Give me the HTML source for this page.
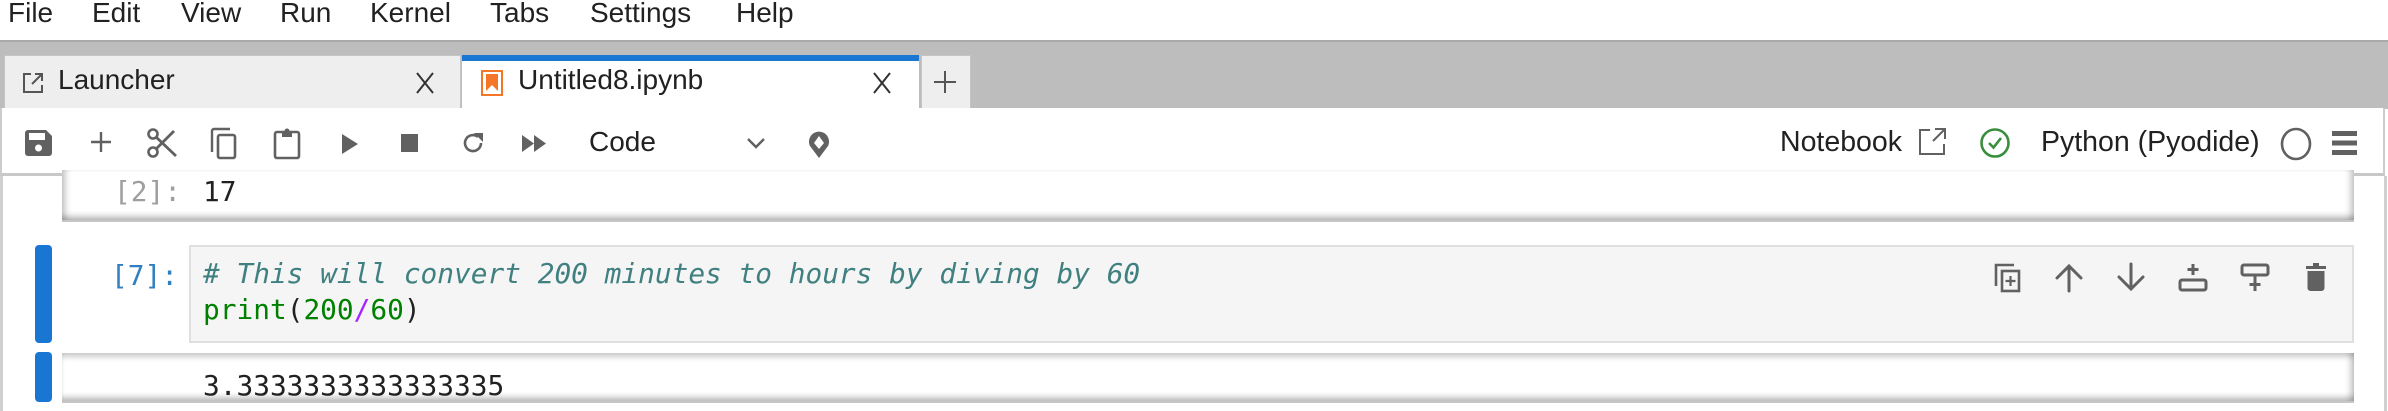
<!DOCTYPE html>
<html><head><meta charset="utf-8"><style>
*{margin:0;padding:0;box-sizing:border-box}
body{width:2388px;height:411px;overflow:hidden;background:#fff;font-family:"Liberation Sans",sans-serif;color:#212121;position:relative}
.a{position:absolute}
.menu{top:-3px;font-size:28px;line-height:32px}
.tabtxt{font-size:28px;line-height:32px;top:64px}
svg{position:absolute;overflow:visible}
.mono{font-family:"DejaVu Sans Mono","Liberation Mono",monospace;font-size:27.8px;white-space:pre}
</style></head><body>
<div class="a menu" style="left:8px">File</div>
<div class="a menu" style="left:92px">Edit</div>
<div class="a menu" style="left:181px">View</div>
<div class="a menu" style="left:280px">Run</div>
<div class="a menu" style="left:370px">Kernel</div>
<div class="a menu" style="left:490px">Tabs</div>
<div class="a menu" style="left:590px">Settings</div>
<div class="a menu" style="left:736px">Help</div>

<div class="a" style="left:0;top:40px;width:2388px;height:69px;background:#bdbdbd;border-top:2px solid #aaa"></div>
<div class="a" style="left:4px;top:55px;width:457px;height:54px;background:#eeeeee;border:1px solid #c4c4c4;border-bottom:none"></div>
<svg style="left:22px;top:72px" width="22" height="22" viewBox="0 0 22 22"><path d="M9 2H2v18h18v-7M13 2h7v7M20 2L10 12" fill="none" stroke="#555" stroke-width="2"/></svg>
<div class="a tabtxt" style="left:58px">Launcher</div>
<svg style="left:416px;top:72px" width="18" height="22"><path d="M1 1l16 20M17 1L1 21" stroke="#333" stroke-width="2"/></svg>
<div class="a" style="left:462px;top:55px;width:457px;height:54px;background:#fff;border-top:6px solid #1976d2"></div>
<svg style="left:481px;top:70px" width="22" height="26" viewBox="0 0 22 26"><rect x="1" y="1" width="20" height="24" fill="none" stroke="#f37726" stroke-width="2"/><path d="M5 4h12v17l-6-6-6 6z" fill="#f37726"/></svg>
<div class="a tabtxt" style="left:518px">Untitled8.ipynb</div>
<svg style="left:873px;top:72px" width="18" height="22"><path d="M1 1l16 20M17 1L1 21" stroke="#333" stroke-width="2"/></svg>
<div class="a" style="left:921px;top:55px;width:50px;height:54px;background:#eeeeee;border:1px solid #c4c4c4;border-bottom:none"></div>
<svg style="left:933px;top:70px" width="24" height="24"><path d="M12 1v22M1 12h22" stroke="#555" stroke-width="2"/></svg>

<div class="a" style="left:0;top:108px;width:2385px;height:68px;background:#fff;border-bottom:3px solid #c8c8c8;border-left:2px solid #ccc;border-right:2px solid #ccc"></div>
<svg style="left:25px;top:130px" width="27" height="26" viewBox="0 0 27 26"><path d="M3 0h18l6 6v17a3 3 0 0 1-3 3H3a3 3 0 0 1-3-3V3a3 3 0 0 1 3-3z" fill="#616161"/><rect x="4" y="3" width="16" height="7" fill="#fff"/><circle cx="13.5" cy="18" r="3.5" fill="#fff"/></svg>
<svg style="left:90px;top:131px" width="22" height="22"><path d="M11 1v20M1 11h20" stroke="#616161" stroke-width="2.4"/></svg>
<svg style="left:147px;top:128px" width="30" height="30" viewBox="0 0 30 30"><circle cx="6" cy="24" r="4.5" fill="none" stroke="#616161" stroke-width="2.6"/><circle cx="6" cy="6" r="4.5" fill="none" stroke="#616161" stroke-width="2.6"/><path d="M9 9l20 19M9 21L27 3" stroke="#616161" stroke-width="2.8"/></svg>
<svg style="left:210px;top:128px" width="28" height="32" viewBox="0 0 28 32"><path d="M2 24V3a2 2 0 0 1 2-2h16" fill="none" stroke="#616161" stroke-width="2.4"/><rect x="8" y="7" width="17" height="23" rx="2" fill="none" stroke="#616161" stroke-width="2.6"/></svg>
<svg style="left:273px;top:128px" width="28" height="32" viewBox="0 0 28 32"><rect x="2" y="4" width="24" height="26" rx="2" fill="none" stroke="#616161" stroke-width="2.6"/><path d="M9 3h10v6H9z" fill="#616161"/><circle cx="14" cy="3" r="2.5" fill="#616161"/></svg>
<svg style="left:342px;top:134px" width="16" height="20"><path d="M0 0l16 10L0 20z" fill="#616161"/></svg>
<svg style="left:401px;top:134px" width="17" height="18"><rect width="17" height="18" fill="#616161"/></svg>
<svg style="left:461px;top:131px" width="24" height="24" viewBox="0 0 24 24"><path d="M20 12a8 8 0 1 1-3-6.2" fill="none" stroke="#616161" stroke-width="2.6"/><path d="M13 2h9v9z" fill="#616161"/></svg>
<svg style="left:522px;top:135px" width="24" height="17"><path d="M0 0l12 8.5L0 17zM12 0l12 8.5L12 17z" fill="#616161"/></svg>
<div class="a" style="left:589px;top:126px;font-size:28px;line-height:32px">Code</div>
<svg style="left:747px;top:138px" width="18" height="11"><path d="M1 1l8 8 8-8" fill="none" stroke="#616161" stroke-width="2.4"/></svg>
<svg style="left:807px;top:128px" width="24" height="31" viewBox="0 0 24 31"><path d="M12 30L3 18A10 10 0 1 1 21 18z" fill="#616161"/><path d="M12 21l-5-6 5-7 5 7z" fill="#fff"/></svg>
<div class="a" style="left:1780px;top:126px;font-size:28.5px;line-height:32px">Notebook</div>
<svg style="left:1918px;top:128px" width="28" height="28" viewBox="0 0 28 28"><path d="M12 2H2v24h24V16M17 1h10v10M27 1L15 13" fill="none" stroke="#616161" stroke-width="2"/></svg>
<svg style="left:1979px;top:127px" width="32" height="32"><circle cx="16" cy="16" r="13.5" fill="none" stroke="#388e3c" stroke-width="2.6"/><path d="M10 16l4.5 4.5L22 11" fill="none" stroke="#388e3c" stroke-width="2.6"/></svg>
<div class="a" style="left:2041px;top:126px;font-size:28.5px;line-height:32px">Python (Pyodide)</div>
<svg style="left:2280px;top:127px" width="32" height="34"><ellipse cx="16" cy="17" rx="14" ry="15" fill="none" stroke="#616161" stroke-width="2.6"/></svg>
<svg style="left:2332px;top:131px" width="25" height="24"><rect y="0" width="25" height="5" fill="#616161"/><rect y="9.5" width="25" height="5" fill="#616161"/><rect y="19" width="25" height="5" fill="#616161"/></svg>

<div class="a" style="left:0;top:176px;width:3px;height:235px;background:#d0d0d0"></div>
<div class="a" style="left:2384px;top:176px;width:3px;height:235px;background:#d0d0d0"></div>
<div class="a" style="left:62px;top:170px;width:2292px;height:52px;background:#fff;box-shadow:inset 0 -7px 6px -3px rgba(0,0,0,.25),inset -7px 0 6px -3px rgba(0,0,0,.2),inset 7px 0 6px -3px rgba(0,0,0,.2);border-bottom:2px solid #c6c6c6"></div>
<div class="a mono" style="left:114px;top:176px;color:#9e9e9e;line-height:32px">[2]:</div>
<div class="a mono" style="left:203px;top:176px;line-height:32px">17</div>

<div class="a" style="left:35px;top:245px;width:17px;height:98px;background:#1976d2;border-radius:4px"></div>
<div class="a" style="left:189px;top:245px;width:2165px;height:98px;background:#f5f5f5;border:2px solid #e0e0e0"></div>
<div class="a mono" style="left:111px;top:258px;color:#307fc1;line-height:36px">[7]:</div>
<div class="a mono" style="left:203px;top:256px;line-height:36px"><span style="color:#408080;font-style:italic"># This will convert 200 minutes to hours by diving by 60</span>
<span style="color:#008000">print</span>(<span style="color:#008000">200</span><span style="color:#aa22ff">/</span><span style="color:#008000">60</span>)</div>
<svg style="left:1994px;top:262px" width="28" height="31" viewBox="0 0 28 31"><path d="M2 24V3h18" fill="none" stroke="#616161" stroke-width="2.6"/><rect x="8" y="9" width="17" height="20" fill="none" stroke="#616161" stroke-width="2.6"/><path d="M16.5 14v10M11.5 19h10" stroke="#616161" stroke-width="2.2"/></svg>
<svg style="left:2055px;top:263px" width="28" height="29" viewBox="0 0 28 29"><path d="M14 28V3M2 15L14 3l12 12" fill="none" stroke="#616161" stroke-width="3" stroke-linecap="round"/></svg>
<svg style="left:2117px;top:263px" width="28" height="29" viewBox="0 0 28 29"><path d="M14 1v25M2 14l12 12 12-12" fill="none" stroke="#616161" stroke-width="3" stroke-linecap="round"/></svg>
<svg style="left:2178px;top:263px" width="30" height="29" viewBox="0 0 30 29"><rect x="2" y="17" width="26" height="10" rx="2" fill="none" stroke="#616161" stroke-width="3"/><path d="M15 1v11M9.5 6.5h11" stroke="#616161" stroke-width="3"/></svg>
<svg style="left:2240px;top:263px" width="30" height="29" viewBox="0 0 30 29"><rect x="2" y="2" width="26" height="10" rx="2" fill="none" stroke="#616161" stroke-width="3"/><path d="M15 12v16M9.5 21.5h11" stroke="#616161" stroke-width="3"/></svg>
<svg style="left:2306px;top:263px" width="20" height="28" viewBox="0 0 20 28"><path d="M0 3h20v3H0zM7 0h6v3H7z" fill="#616161"/><path d="M1.5 8h17v17a3 3 0 0 1-3 3h-11a3 3 0 0 1-3-3z" fill="#616161"/></svg>

<div class="a" style="left:35px;top:352px;width:17px;height:50px;background:#1976d2;border-radius:4px"></div>
<div class="a" style="left:62px;top:353px;width:2292px;height:50px;background:#fff;box-shadow:inset 0 -7px 6px -3px rgba(0,0,0,.25),inset 0 7px 6px -3px rgba(0,0,0,.2),inset -7px 0 6px -3px rgba(0,0,0,.2);border-bottom:2px solid #c6c6c6"></div>
<div class="a mono" style="left:203px;top:369px;line-height:34px">3.3333333333333335</div>
</body></html>
